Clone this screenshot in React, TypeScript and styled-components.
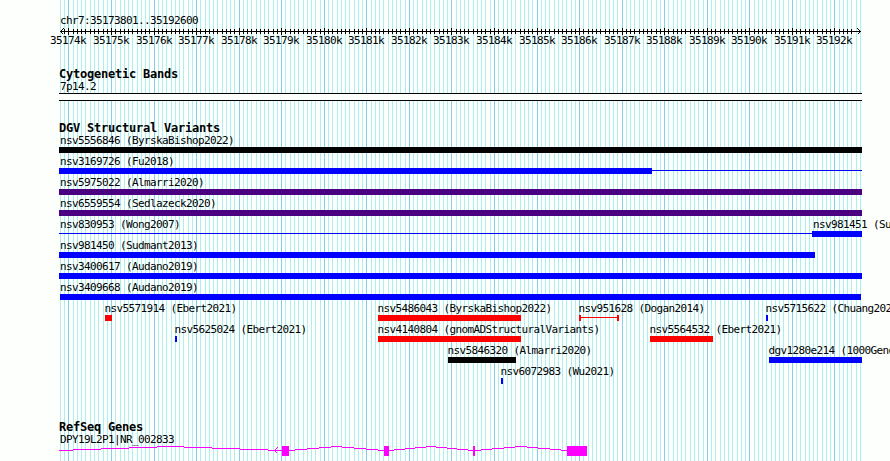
import React from "react";
import styled, { createGlobalStyle } from "styled-components";

const GlobalStyle = createGlobalStyle`
  html, body { margin: 0; padding: 0; overflow: hidden; background: #fdfffd; }
`;

const WIDTH = 803;
const REGION_START = 173801;
const ORIGIN = 1;
const PX_PER_BP = 800 / 18800;

const toX = (bp: number) => Math.round(ORIGIN + (bp - REGION_START) * PX_PER_BP);

const Page = styled.main`
  position: relative;
  isolation: isolate;
  box-sizing: border-box;
  width: 890px;
  height: 461px;
  padding-left: 59px;
  overflow: hidden;
  color: #000;
  font: 11px/12px "DejaVu Sans Mono", "Liberation Mono", monospace;
  letter-spacing: -0.622px;
`;

const GridLines = styled.svg`
  position: absolute;
  top: 0;
  left: 59px;
  z-index: -1;
`;

const Section = styled.section<{ $top: number }>`
  width: ${WIDTH}px;
  padding-top: ${(p) => p.$top}px;
`;

const Text = styled.div`
  height: 12px;
  padding-left: 1px;
  white-space: pre;
`;

const Heading = styled.h2`
  height: 13px;
  margin: 0;
  font: bold 12px/13px "DejaVu Sans Mono", "Liberation Mono", monospace;
  letter-spacing: -0.224px;
  white-space: pre;
`;

const Drawing = styled.svg<{ $top?: number }>`
  display: block;
  overflow: visible;
  margin-top: ${(p) => p.$top ?? 0}px;
`;

const TickLabels = styled.div`
  display: flex;
  height: 12px;
`;

const TickLabel = styled.span<{ $gap: number }>`
  flex: none;
  width: 36px;
  margin-left: ${(p) => p.$gap}px;
  white-space: pre;
`;

const Band = styled.div`
  height: 6px;
  border: solid #000;
  border-width: 1px 0;
  background: #fdfffd;
`;

const Row = styled.div`
  display: flex;
  height: 21px;
`;

const Feature = styled.div<{ $gap: number; $width: number }>`
  flex: none;
  width: ${(p) => p.$width}px;
  margin-left: ${(p) => p.$gap}px;
`;

const FeatureLabel = styled.div<{ $shift: number }>`
  height: 12px;
  margin-left: ${(p) => p.$shift}px;
  white-space: pre;
`;

const Glyph = styled.div`
  display: flex;
  height: 6px;
`;

const Bar = styled.div<{ $color: string; $width: number }>`
  width: ${(p) => p.$width}px;
  height: 6px;
  background: ${(p) => p.$color};
`;

const Line = styled.div<{ $color: string }>`
  flex: 1;
  height: 1px;
  margin-top: 2px;
  background: ${(p) => p.$color};
`;

type Variant = {
  name: string;
  start: number;
  end: number;
  color: string;
  shape?: "bar" | "line" | "span";
  solid?: number;
  shift?: number;
};

const BLUE = "#0000ff";
const RED = "#ff0000";
const INDIGO = "#4b0082";
const BLACK = "#000000";

const rows: Variant[][] = [
  [{ name: "nsv5556846 (ByrskaBishop2022)", start: 0, end: 803, color: BLACK, shift: 1 }],
  [{ name: "nsv3169726 (Fu2018)", start: 0, end: 803, color: BLUE, solid: 593, shift: 1 }],
  [{ name: "nsv5975022 (Almarri2020)", start: 0, end: 803, color: INDIGO, shift: 1 }],
  [{ name: "nsv6559554 (Sedlazeck2020)", start: 0, end: 803, color: INDIGO, shift: 1 }],
  [
    { name: "nsv830953 (Wong2007)", start: 0, end: 753, color: BLUE, shape: "line", shift: 1 },
    { name: "nsv981451 (Sudmant2013)", start: 753, end: 803, color: BLUE, shift: 1 },
  ],
  [{ name: "nsv981450 (Sudmant2013)", start: 0, end: 756, color: BLUE, shift: 1 }],
  [{ name: "nsv3400617 (Audano2019)", start: 0, end: 803, color: BLUE, shift: 1 }],
  [{ name: "nsv3409668 (Audano2019)", start: 1, end: 802, color: BLUE, shift: 0 }],
  [
    { name: "nsv5571914 (Ebert2021)", start: 46, end: 53, color: RED },
    { name: "nsv5486043 (ByrskaBishop2022)", start: 319, end: 462, color: RED },
    { name: "nsv951628 (Dogan2014)", start: 520, end: 560, color: RED, shape: "span" },
    { name: "nsv5715622 (Chuang2021)", start: 707, end: 709, color: BLUE },
  ],
  [
    { name: "nsv5625024 (Ebert2021)", start: 116, end: 118, color: BLUE },
    { name: "nsv4140804 (gnomADStructuralVariants)", start: 319, end: 462, color: RED },
    { name: "nsv5564532 (Ebert2021)", start: 591, end: 654, color: RED },
  ],
  [
    { name: "nsv5846320 (Almarri2020)", start: 389, end: 457, color: BLACK },
    { name: "dgv1280e214 (1000GenomesConsortium)", start: 710, end: 803, color: BLUE },
  ],
  [{ name: "nsv6072983 (Wu2021)", start: 442, end: 444, color: BLUE }],
];

const VariantGlyph = ({ v }: { v: Variant }) => {
  const width = v.end - v.start;
  if (v.shape === "line") return <Glyph><Line $color={v.color} /></Glyph>;
  if (v.shape === "span")
    return (
      <Glyph>
        <Bar $color={v.color} $width={2} />
        <Line $color={v.color} />
        <Bar $color={v.color} $width={2} />
      </Glyph>
    );
  return (
    <Glyph>
      <Bar $color={v.color} $width={v.solid ?? width} />
      {v.solid && <Line $color={v.color} />}
    </Glyph>
  );
};

const VariantRow = ({ items }: { items: Variant[] }) => (
  <Row>
    {items.map((v, i) => (
      <Feature key={v.name} $gap={v.start - (i ? items[i - 1].end : 0)} $width={v.end - v.start}>
        <FeatureLabel $shift={v.shift ?? -0.6}>{v.name}</FeatureLabel>
        <VariantGlyph v={v} />
      </Feature>
    ))}
  </Row>
);

const marks = Array.from({ length: 189 }, (_, i) => 173800 + i * 100);
const majors = marks.filter((bp) => bp % 1000 === 0);

const Grid = () => (
  <GridLines width={WIDTH} height={461} shapeRendering="crispEdges">
    {marks.map((bp) => (
      <rect key={bp} x={toX(bp)} y={0} width={1} height={461} fill={bp % 1000 ? "#afeeee" : "#87ceeb"} />
    ))}
  </GridLines>
);

const Axis = () => (
  <Drawing $top={1} width={WIDTH} height={7} shapeRendering="crispEdges">
    <rect x={1} y={3} width={801} height={1} />
    {marks.slice(1, -2).map((bp) => {
      const major = bp % 1000 === 0;
      return <rect key={bp} x={toX(bp)} y={major ? 0 : 1} width={1} height={major ? 7 : 5} />;
    })}
    <path d="M4.5 .5L1.5 3.5L4.5 6.5M798.5 .5L801.5 3.5L798.5 6.5" fill="none" stroke="#000" />
  </Drawing>
);

const exons = [
  [223, 230],
  [325, 330],
  [414, 416],
  [508, 528],
];

/* Introns rise four pixels to the midpoint and fall back, one pixel per step. */
const intronSteps = (from: number, to: number) => {
  const heights = [4, 3, 2, 1, 0, 1, 2, 3, 4];
  const step = (to - from) / 8;
  const edge = (k: number) =>
    k === 0 ? from : k === 9 ? to : Math.round(from + step * (k - 0.5));
  return heights.map((y, k) => ({ x: edge(k), y, width: edge(k + 1) - edge(k) }));
};

const Gene = () => (
  <Drawing width={WIDTH} height={10} shapeRendering="crispEdges" fill="#ff00ff">
    {exons.map(([start, end], i) => (
      <g key={start}>
        {intronSteps(i ? exons[i - 1][1] : 0, start).map((s) => (
          <rect key={s.x} x={s.x} y={s.y} width={s.width} height={1} />
        ))}
        <rect x={start} y={0} width={end - start} height={10} />
      </g>
    ))}
    <path d="M218.5 1.5L215.5 4.5L218.5 7.5" fill="none" stroke="#ff00ff" />
  </Drawing>
);

export default function App() {
  return (
    <>
      <GlobalStyle />
      <Page>
        <Grid />
        <Section $top={15}>
          <Text>chr7:35173801..35192600</Text>
          <Axis />
          <TickLabels>
            {majors.map((bp, i) => (
              <TickLabel key={bp} $gap={i ? toX(bp) - toX(majors[i - 1]) - 36 : toX(bp) - 18}>
                {`35${bp / 1000}k`}
              </TickLabel>
            ))}
          </TickLabels>
        </Section>
        <Section $top={21}>
          <Heading>Cytogenetic Bands</Heading>
          <Text>7p14.2</Text>
          <Band />
        </Section>
        <Section $top={21}>
          <Heading>DGV Structural Variants</Heading>
          {rows.map((items, i) => (
            <VariantRow key={i} items={items} />
          ))}
        </Section>
        <Section $top={34}>
          <Heading>RefSeq Genes</Heading>
          <Text>DPY19L2P1|NR_002833</Text>
          <Gene />
        </Section>
      </Page>
    </>
  );
}
